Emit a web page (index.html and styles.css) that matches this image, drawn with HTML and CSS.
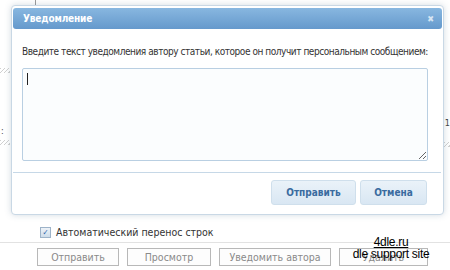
FILE: index.html
```html
<html>

<head>
  <link rel="stylesheet" href="styles.css">
</head>

<body>
  <div class="page">
    <div class="editor-top"></div>
    <div class="editor-area">
      <span class="hatch hatch-left-1"></span>
      <span class="side-mark mark-left">:</span>
      <span class="hatch hatch-left-2"></span>
      <span class="side-mark mark-right">1</span>
      <span class="hatch hatch-right"></span>
    </div>
    <div class="wrap-row">
      <label class="wrap-label"><span class="checkbox">&#10003;</span>Автоматический перенос строк</label>
    </div>
    <div class="page-buttons">
      <button class="page-btn btn-send">Отправить</button>
      <button class="page-btn btn-preview">Просмотр</button>
      <button class="page-btn btn-notify">Уведомить автора</button>
      <button class="page-btn btn-delete">Удалить</button>
    </div>
  </div>

  <div class="dialog">
    <div class="dialog-title">
      <span>Уведомление</span>
      <span class="dialog-close">&#10006;</span>
    </div>
    <div class="dialog-body">
      <div class="dialog-text">Введите текст уведомления автору статьи, которое он получит персональным сообщением:</div>
      <div class="textarea-wrap">
        <textarea class="dialog-textarea"></textarea>
        <span class="caret"></span>
      </div>
    </div>
    <div class="dialog-footer">
      <button class="dialog-btn">Отправить</button>
      <button class="dialog-btn btn-cancel">Отмена</button>
    </div>
  </div>

  <div class="watermark">
    <a class="watermark-link">4dle.ru</a>
    <div>dle support site</div>
  </div>
</body>

</html>
```

FILE: styles.css
```css
body {
  margin: 0;
  width: 450px;
  height: 270px;
  overflow: hidden;
  background-color: white;
  font-family: "DejaVu Sans Condensed", "DejaVu Sans", sans-serif;
  font-size: 11px;
  position: relative;
}

.page {
  display: flex;
  flex-direction: column;
}

.editor-top {
  height: 6px;
  margin-left: 35px;
  width: 1px;
  background-color: #9a9a9a;
}

.editor-area {
  height: 218px;
  position: relative;
}

.hatch {
  position: absolute;
  width: 10px;
  height: 5px;
  background: repeating-linear-gradient(135deg, #d0d0d0 0 1px, transparent 1px 3px);
}

.hatch-left-1 {
  left: 0;
  top: 62px;
}

.hatch-left-2 {
  left: 0;
  top: 134px;
}

.hatch-right {
  right: 0;
  top: 136px;
}

.side-mark {
  position: absolute;
  font-size: 9px;
  color: #444;
}

.mark-left {
  left: 1px;
  top: 120px;
}

.mark-right {
  right: 0;
  top: 112px;
}

.wrap-row {
  height: 16px;
  padding: 2px 0 0 40px;
  border-bottom: 1px solid #e2e2e2;
}

.wrap-label {
  display: flex;
  align-items: center;
  gap: 5px;
  color: #333;
  font-size: 10.5px;
}

.checkbox {
  width: 9px;
  height: 9px;
  border: 1px solid #9db3c9;
  background: linear-gradient(#eef3f8, #cddcea);
  color: #2a5fa8;
  font-size: 8px;
  line-height: 9px;
  text-align: center;
  font-weight: bold;
}

.page-buttons {
  display: flex;
  gap: 8px;
  padding: 5px 0 0 37px;
}

.page-btn {
  height: 18px;
  padding: 0;
  border: 1px solid #b8b8b8;
  background-color: #fdfdfd;
  color: #8a8a8a;
  font-family: "DejaVu Sans Condensed", "DejaVu Sans", sans-serif;
  font-size: 10.5px;
}

.btn-send {
  width: 82px;
}

.btn-preview {
  width: 84px;
}

.btn-notify {
  width: 112px;
}

.btn-delete {
  width: 89px;
}

.dialog {
  position: absolute;
  left: 11px;
  top: 5px;
  width: 433px;
  height: 210px;
  box-sizing: border-box;
  padding: 2px 1px 0 1px;
  border: 1px solid #c9d8e5;
  border-radius: 4px;
  background-color: white;
  box-shadow: 0 0 6px rgba(80, 110, 140, 0.25);
  display: flex;
  flex-direction: column;
}

.dialog-title {
  height: 21px;
  display: flex;
  justify-content: space-between;
  align-items: center;
  padding: 0 8px 0 10px;
  border-radius: 3px;
  background: linear-gradient(#88b7e0, #6599cc);
  color: white;
  font-size: 10px;
  font-weight: bold;
  letter-spacing: -0.15px;
}

.dialog-close {
  color: #d6e5f3;
  font-size: 9px;
}

.dialog-body {
  padding: 16px 15px 0 9px;
}

.dialog-text {
  color: #333;
  font-size: 10px;
  letter-spacing: -0.45px;
  line-height: 14px;
  white-space: nowrap;
}

.textarea-wrap {
  position: relative;
  margin-top: 9px;
}

.dialog-textarea {
  display: block;
  width: 406px;
  height: 93px;
  box-sizing: border-box;
  border: 1px solid #b9cfe2;
  border-radius: 2px;
  background-color: #fbfdfe;
  outline: none;
}

.caret {
  position: absolute;
  left: 5px;
  top: 5px;
  width: 1px;
  height: 12px;
  background-color: #222;
}

.dialog-footer {
  margin: 11px 1px 0 0;
  padding-top: 7px;
  padding-right: 14px;
  border-top: 1px solid #c6d8e7;
  display: flex;
  justify-content: flex-end;
  gap: 4px;
}

.dialog-btn {
  height: 25px;
  width: 85px;
  border: 1px solid #cfdfec;
  border-radius: 3px;
  background: linear-gradient(#eaf2f9, #d9e7f3);
  color: #3a6b9f;
  font-family: "DejaVu Sans Condensed", "DejaVu Sans", sans-serif;
  font-size: 10px;
  font-weight: bold;
}

.btn-cancel {
  width: 67px;
}

.watermark {
  position: absolute;
  left: 351px;
  top: 236px;
  width: 80px;
  font-family: "Liberation Sans", Arial, sans-serif;
  font-size: 12px;
  letter-spacing: -0.3px;
  line-height: 12px;
  color: black;
  text-align: center;
}

.watermark-link {
  text-decoration: underline;
}
```
